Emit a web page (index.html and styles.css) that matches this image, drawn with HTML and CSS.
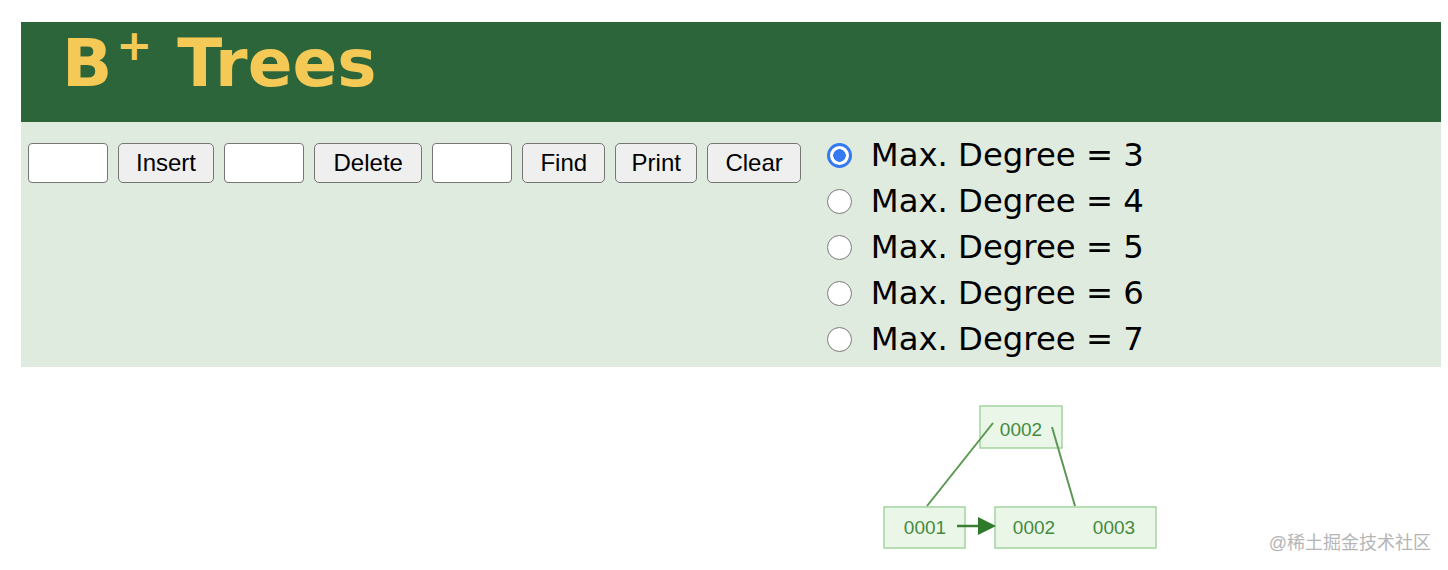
FILE: index.html
```html
<!DOCTYPE html>
<html lang="en">
<head>
    <meta charset="UTF-8" />
    <title>B+ Trees</title>
    <link rel="stylesheet" href="styles.css">
</head>
<body>

<div class="page">
    <!-- header -->
    <div class="header">
        <h1>B<sup>+</sup> Trees</h1>
    </div>

    <!-- controls -->
    <div class="controls">
        <div class="actions">
            <input type="text" class="field" />
            <button>Insert</button>
            <input type="text" class="field" />
            <button class="wide">Delete</button>
            <input type="text" class="field" />
            <button>Find</button>
            <button class="narrow">Print</button>
            <button>Clear</button>
        </div>
        <div class="degrees">
            <label><input type="radio" name="degree" value="3" checked /> Max. Degree = 3</label>
            <label><input type="radio" name="degree" value="4" /> Max. Degree = 4</label>
            <label><input type="radio" name="degree" value="5" /> Max. Degree = 5</label>
            <label><input type="radio" name="degree" value="6" /> Max. Degree = 6</label>
            <label><input type="radio" name="degree" value="7" /> Max. Degree = 7</label>
        </div>
    </div>

    <!-- canvas -->
    <svg class="canvas" width="1420" height="202" viewBox="0 0 1420 202">
        <rect x="959" y="39" width="82" height="42" class="node" />
        <rect x="863" y="140" width="81" height="41" class="node" />
        <rect x="974" y="140" width="161" height="41" class="node" />

        <g class="edge">
            <line x1="972" y1="56" x2="906" y2="139" />
            <line x1="1031" y1="60" x2="1054" y2="139" />
            <line x1="936" y1="159" x2="960" y2="159" class="link" />
        </g>
        <polygon points="957,150 975,159 957,168" class="arrow" />

        <text x="1000" y="69" class="key">0002</text>
        <text x="904" y="167" class="key">0001</text>
        <text x="1013" y="167" class="key">0002</text>
        <text x="1093" y="167" class="key">0003</text>
    </svg>
</div>

<div class="watermark">@稀土掘金技术社区</div>

</body>
</html>
```

FILE: styles.css
```css
body {
    margin: 0;
    font-family: "DejaVu Sans", Verdana, sans-serif;
    background: #ffffff;
}
.page {
    padding: 22px 7px 0 21px;
}
.header {
    height: 100px;
    background: #2d653b;
    padding-left: 41px;
    box-sizing: border-box;
}
.header h1 {
    margin: 0;
    font-size: 66px;
    line-height: 84px;
    font-weight: bold;
    color: #f5c956;
}
.header sup {
    font-size: 43px;
    line-height: 0;
    vertical-align: 26px;
    margin-left: 4px;
    margin-right: 2px;
}
.controls {
    display: flex;
    align-items: flex-start;
    gap: 26px;
    background: #e0ebdf;
    padding: 10px 0 5px 7px;
}
.actions {
    display: flex;
    gap: 10px;
    margin-top: 11px;
}
.field {
    width: 80px;
    height: 40px;
    box-sizing: border-box;
    border: 1px solid #767676;
    border-radius: 4px;
    background: #ffffff;
    margin: 0;
}
button {
    height: 40px;
    padding: 0 17px;
    font-family: "Liberation Sans", Arial, sans-serif;
    font-size: 24px;
    color: #000000;
    background: #efefef;
    border: 1px solid #767676;
    border-radius: 5px;
    margin: 0;
}
button.wide {
    padding: 0 18.5px;
}
button.narrow {
    padding: 0 15.5px;
}
.degrees {
    display: flex;
    flex-direction: column;
}
.degrees label {
    display: flex;
    align-items: center;
    height: 46px;
    font-size: 32.3px;
    color: #000000;
    gap: 19px;
}
.degrees input[type="radio"] {
    appearance: none;
    -webkit-appearance: none;
    width: 25px;
    height: 25px;
    margin: 0;
    border: 1.5px solid #7a7a7a;
    border-radius: 50%;
    background: #ffffff;
    box-sizing: border-box;
}
.degrees input[type="radio"]:checked {
    border: 3px solid #3679f0;
    background: radial-gradient(circle, #3679f0 0 6px, #ffffff 6.5px);
}
.canvas {
    display: block;
}
.edge line {
    stroke: #5a9852;
    stroke-width: 2;
}
.edge .link {
    stroke: #3a7d33;
    stroke-width: 2.5;
}
.arrow {
    fill: #2f7a2a;
}
.node {
    fill: #eaf7e8;
    stroke: #a3d59f;
    stroke-width: 1.5;
}
.key {
    font-family: "Liberation Sans", Arial, sans-serif;
    font-size: 19px;
    fill: #458a3f;
    text-anchor: middle;
}
.watermark {
    position: absolute;
    right: 17px;
    bottom: 16px;
    font-family: "Liberation Sans", "Noto Sans CJK SC", sans-serif;
    font-size: 18px;
    color: #b5b5b5;
}
```
